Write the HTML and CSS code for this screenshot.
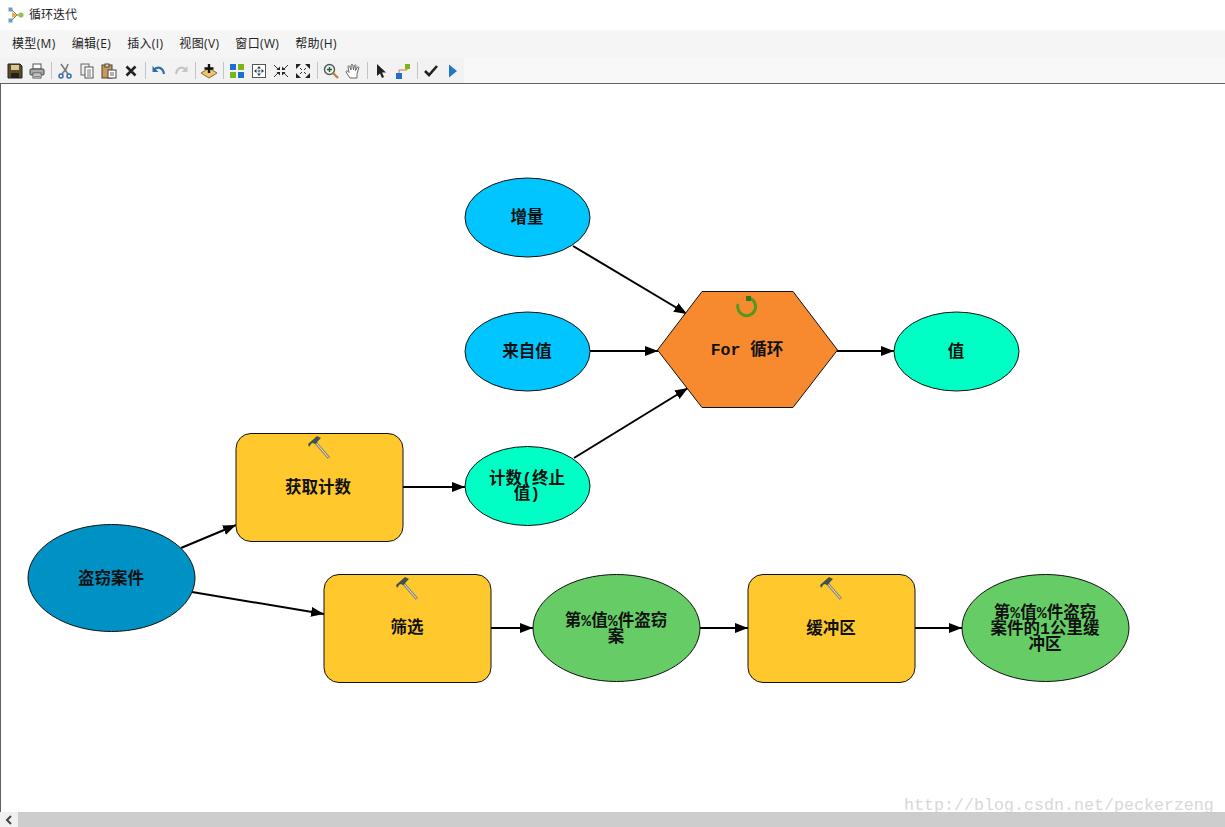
FILE: index.html
```html
<!DOCTYPE html>
<html lang="zh-CN">
<head>
  <meta charset="UTF-8">
  <title>循环迭代</title>
  <link rel="stylesheet" href="styles.css">
</head>
<body>
  <div class="window">
    <div class="titlebar">
      <svg class="app-icon" width="16" height="16" viewBox="0 0 16 16">
        <path d="M3 2 L9 8 L3 14" fill="none" stroke="#777" stroke-width="1"/>
        <path d="M9 8 H13" stroke="#777"/>
        <rect x="0.5" y="0.5" width="4" height="4" fill="#6a9ccc"/>
        <rect x="0.5" y="11.5" width="4" height="4" fill="#6a9ccc"/>
        <path d="M4 5 L9 8 L4 11 Z" fill="#e8b040"/>
        <circle cx="13" cy="8" r="2.6" fill="#8cc850"/>
      </svg>
      <span>循环迭代</span>
    </div>

    <div class="menubar">
      <span>模型(M)</span>
      <span>编辑(E)</span>
      <span>插入(I)</span>
      <span>视图(V)</span>
      <span>窗口(W)</span>
      <span>帮助(H)</span>
    </div>

    <div class="toolbar">
      <!-- save -->
      <div class="tool"><svg width="16" height="16" viewBox="0 0 16 16"><path d="M1 1H13L15 3V15H1Z" fill="#5a4a28" stroke="#222"/><rect x="4" y="2" width="8" height="5" fill="#d8c890"/><rect x="4" y="10" width="8" height="5" fill="#222"/></svg></div>
      <!-- print -->
      <div class="tool"><svg width="16" height="16" viewBox="0 0 16 16"><rect x="4" y="1" width="8" height="5" fill="#fff" stroke="#555"/><rect x="1" y="6" width="14" height="6" rx="1" fill="#aaa" stroke="#444"/><rect x="4" y="10" width="8" height="5" fill="#fff" stroke="#555"/><path d="M5 12H11M5 13.5H11" stroke="#888"/></svg></div>
      <div class="sep"></div>
      <!-- cut -->
      <div class="tool"><svg width="16" height="16" viewBox="0 0 16 16"><path d="M4 1L11 11M11 1L9 6L5 11" fill="none" stroke="#777" stroke-width="1.5"/><circle cx="4" cy="13" r="2" fill="none" stroke="#2f6ea8" stroke-width="1.5"/><circle cx="12" cy="13" r="2" fill="none" stroke="#2f6ea8" stroke-width="1.5"/></svg></div>
      <!-- copy -->
      <div class="tool"><svg width="16" height="16" viewBox="0 0 16 16"><rect x="2" y="1" width="8" height="11" fill="#eee" stroke="#666"/><rect x="6" y="4" width="8" height="11" fill="#fff" stroke="#555"/><path d="M8 7H12M8 9H12M8 11H12M8 13H12" stroke="#777"/></svg></div>
      <!-- paste -->
      <div class="tool"><svg width="16" height="16" viewBox="0 0 16 16"><rect x="1" y="2" width="10" height="13" fill="#c89a58" stroke="#5a4020"/><rect x="4" y="1" width="4" height="3" fill="#ddd" stroke="#444"/><rect x="7" y="7" width="8" height="8" fill="#fff" stroke="#444"/><path d="M9 10H13M9 12H13" stroke="#666"/></svg></div>
      <!-- delete -->
      <div class="tool"><svg width="16" height="16" viewBox="0 0 16 16"><path d="M3.5 3.5L12.5 12.5M12.5 3.5L3.5 12.5" stroke="#222" stroke-width="2.6"/></svg></div>
      <div class="sep"></div>
      <!-- undo -->
      <div class="tool"><svg width="16" height="16" viewBox="0 0 16 16"><path d="M3 7C6 3 12 4 13 11" fill="none" stroke="#2f6ea8" stroke-width="2.2"/><path d="M1.500 3V9H7.500Z" fill="#2f6ea8"/></svg></div>
      <!-- redo -->
      <div class="tool"><svg width="16" height="16" viewBox="0 0 16 16"><path d="M13 7C10 3 4 4 3 11" fill="none" stroke="#c4c4c4" stroke-width="2.2"/><path d="M14.500 3V9H8.500Z" fill="#c4c4c4"/></svg></div>
      <div class="sep"></div>
      <!-- add data -->
      <div class="tool"><svg width="16" height="16" viewBox="0 0 16 16"><path d="M8 5L16 10L8 15L0 10Z" fill="#eac674" stroke="#8a6a28"/><path d="M8 1V10M3.500 5.500H12.500" stroke="#111" stroke-width="2.4"/></svg></div>
      <div class="sep"></div>
      <!-- auto layout -->
      <div class="tool"><svg width="16" height="16" viewBox="0 0 16 16"><rect x="1" y="1" width="6" height="6" fill="#1f6fd0"/><rect x="9" y="1" width="6" height="6" fill="#7cb518"/><rect x="1" y="9" width="6" height="6" fill="#7cb518"/><rect x="9" y="9" width="6" height="6" fill="#1f6fd0"/></svg></div>
      <!-- full extent -->
      <div class="tool"><svg width="16" height="16" viewBox="0 0 16 16"><rect x="1.500" y="1.500" width="13" height="13" fill="#fff" stroke="#555"/><path d="M8 3L10 5.500H6ZM8 13L10 10.500H6ZM3 8L5.500 6V10ZM13 8L10.500 6V10Z" fill="#333"/><circle cx="8" cy="8" r="1.500" fill="#5a8cc0"/></svg></div>
      <!-- zoom in fixed -->
      <div class="tool"><svg width="16" height="16" viewBox="0 0 16 16"><path d="M1 2L6 7M15 2L10 7M1 14L6 9M15 14L10 9" stroke="#333" stroke-width="1"/><path d="M7 7V3.500L3.500 7ZM9 7H12.500L9 3.500ZM7 9H3.500L7 12.500ZM9 9V12.500L12.500 9Z" fill="#222"/></svg></div>
      <!-- zoom out fixed -->
      <div class="tool"><svg width="16" height="16" viewBox="0 0 16 16"><path d="M5 5L7 7M11 5L9 7M5 11L7 9M11 11L9 9" stroke="#333"/><path d="M1 1H6L1 6ZM15 1H10L15 6ZM1 15H6L1 10ZM15 15H10L15 10Z" fill="#222"/></svg></div>
      <div class="sep"></div>
      <!-- magnifier -->
      <div class="tool"><svg width="16" height="16" viewBox="0 0 16 16"><circle cx="6.500" cy="6.500" r="5" fill="#eef3f7" stroke="#555" stroke-width="1.400"/><path d="M10 10L15 15" stroke="#b08840" stroke-width="2.400"/><path d="M4 6.500H9M6.500 4V9" stroke="#1f6020" stroke-width="1.400"/></svg></div>
      <!-- pan -->
      <div class="tool"><svg width="16" height="16" viewBox="0 0 16 16"><path d="M5 15L1 9C0.500 8 2 7.500 2.500 8L4 9.500L3 3.500C3 2.500 4.500 2.500 4.800 3.500L6 7L6.200 2C6.300 1 7.700 1 7.800 2L8.500 7L9.500 2.500C9.800 1.500 11 1.800 11 2.800L10.500 7.500L12.500 4C13 3.300 14 3.800 13.800 4.600L12 11V15Z" fill="#fff" stroke="#666"/></svg></div>
      <div class="sep"></div>
      <!-- select -->
      <div class="tool"><svg width="16" height="16" viewBox="0 0 16 16"><path d="M4 1V13L7 10.500L9 15L11 14L9 9.500H13Z" fill="#222"/></svg></div>
      <!-- connect -->
      <div class="tool"><svg width="16" height="16" viewBox="0 0 16 16"><path d="M4 11V7H12V4" fill="none" stroke="#c87830"/><rect x="1" y="10" width="6" height="6" fill="#1f6fd0"/><rect x="10" y="1" width="5" height="5" fill="#7cb518"/></svg></div>
      <div class="sep"></div>
      <!-- validate -->
      <div class="tool"><svg width="16" height="16" viewBox="0 0 16 16"><path d="M2 8L6 12L14 3" fill="none" stroke="#222" stroke-width="2.600"/></svg></div>
      <!-- run -->
      <div class="tool"><svg width="16" height="16" viewBox="0 0 16 16"><path d="M4 1.500L12 8L4 14.500Z" fill="#1f78c8"/></svg></div>
    </div>

    <div class="canvas">
      <svg class="diagram" width="1224" height="728" viewBox="1 84 1224 728">
        <defs>
          <marker id="head" markerUnits="userSpaceOnUse" markerWidth="14" markerHeight="12" refX="13" refY="5" orient="auto">
            <path d="M0 0L13 5L0 10Z" fill="#000"/>
          </marker>
          <symbol id="hammer" viewBox="0 0 24 24">
            <path d="M8 7L22 23" stroke="#8a8a70" stroke-width="3"/>
            <path d="M9 8L21.500 22.500" stroke="#e8e4d0" stroke-width="1"/>
            <path d="M1 9L10 1L14 3L11 6L9 9L5 8L2 12Z" fill="#44504c"/>
          </symbol>
        </defs>

        <g class="edges">
          <line x1="573" y1="246" x2="687" y2="314"/>
          <line x1="590" y1="351" x2="658" y2="351"/>
          <line x1="574" y1="458" x2="688" y2="388"/>
          <line x1="837" y1="351" x2="894" y2="351"/>
          <line x1="403" y1="487" x2="465" y2="487"/>
          <line x1="181" y1="548" x2="236" y2="525"/>
          <line x1="192" y1="592" x2="324" y2="614"/>
          <line x1="491" y1="628" x2="533" y2="628"/>
          <line x1="700" y1="628" x2="748" y2="628"/>
          <line x1="915" y1="628" x2="962" y2="628"/>
        </g>

        <g class="nodes">
          <ellipse class="input" cx="527.500" cy="217.500" rx="62.500" ry="39.500"/>
          <ellipse class="input" cx="527.500" cy="351.500" rx="62.500" ry="39.500"/>
          <ellipse class="value" cx="527.500" cy="486" rx="62.500" ry="39.500"/>
          <ellipse class="value" cx="956.500" cy="351.500" rx="62.500" ry="39.500"/>
          <ellipse class="source" cx="111.500" cy="578" rx="83.500" ry="53.500"/>
          <ellipse class="output" cx="616.500" cy="628" rx="83.500" ry="53.500"/>
          <ellipse class="output" cx="1045.500" cy="628" rx="83.500" ry="53.500"/>
          <polygon class="iterator" points="657.500,350 702,291.500 793,291.500 837.500,350 793,407.500 702,407.500"/>
          <rect class="tool-node" x="236" y="433.500" width="167" height="108" rx="15"/>
          <rect class="tool-node" x="324" y="574.500" width="167" height="108" rx="15"/>
          <rect class="tool-node" x="748" y="574.500" width="167" height="108" rx="15"/>
        </g>

        <use href="#hammer" x="307" y="435" width="24" height="24"/>
        <use href="#hammer" x="395" y="576" width="24" height="24"/>
        <use href="#hammer" x="819" y="576" width="24" height="24"/>

        <path class="loop" d="M750.500 298.500A9 9 0 1 1 738 304"/>
        <rect class="loop-tip" x="746" y="296" width="5" height="5"/>

        <g class="labels">
          <text x="527" y="223">增量</text>
          <text x="527" y="357">来自值</text>
          <text><tspan x="527" y="484">计数(终止</tspan><tspan x="527" y="499">值)</tspan></text>
          <text x="956" y="357">值</text>
          <text x="111" y="584">盗窃案件</text>
          <text x="318" y="493">获取计数</text>
          <text x="407" y="633">筛选</text>
          <text><tspan x="616" y="626">第%值%件盗窃</tspan><tspan x="616" y="642">案</tspan></text>
          <text x="831" y="634">缓冲区</text>
          <text><tspan x="1045" y="618">第%值%件盗窃</tspan><tspan x="1045" y="634">案件的1公里缓</tspan><tspan x="1045" y="650">冲区</tspan></text>
          <text x="747" y="355">For 循环</text>
        </g>
      </svg>
    </div>

    <div class="hscroll">
      <div class="hscroll-btn">
        <svg width="8" height="10" viewBox="0 0 8 10"><path d="M6 1L2 5L6 9" fill="none" stroke="#444" stroke-width="2"/></svg>
      </div>
      <div class="hscroll-track"></div>
    </div>

    <div class="watermark">http://blog.csdn.net/peckerzeng</div>
  </div>
</body>
</html>
```

FILE: styles.css
```css
* {
  box-sizing: border-box;
}
body {
  margin: 0;
  font-family: "Open Sans", "Noto Sans CJK SC", sans-serif;
  font-size: 12px;
  color: #222;
  background: #fff;
  overflow: hidden;
}
.window {
  position: relative;
  display: flex;
  flex-direction: column;
  width: 1225px;
  height: 827px;
}
.titlebar {
  display: flex;
  align-items: center;
  gap: 5px;
  height: 30px;
  padding-left: 8px;
  line-height: 16px;
  background: #fff;
}
.titlebar span {
  padding-bottom: 1px;
}
.menubar {
  display: flex;
  align-items: center;
  gap: 16px;
  height: 28px;
  padding-left: 12px;
  padding-bottom: 1px;
  line-height: 16px;
  letter-spacing: 0.35px;
  background: #f5f5f5;
}
.menubar span {
  white-space: nowrap;
}
.toolbar {
  display: flex;
  align-items: center;
  height: 25px;
  padding-left: 4px;
  background: linear-gradient(to right, #f2f2f2 464px, #f8f8f8 464px);
}
.tool {
  display: flex;
  align-items: center;
  justify-content: center;
  width: 22px;
  height: 22px;
}
.sep {
  width: 1px;
  height: 17px;
  margin: 0 2.5px;
  background: #c4c4c4;
}
.canvas {
  flex: 1;
  min-height: 0;
  border-top: 1px solid #606060;
  border-left: 1px solid #606060;
  background: #fff;
}
.diagram {
  display: block;
}
.edges line {
  stroke: #000;
  stroke-width: 2;
  marker-end: url(#head);
}
.nodes > * {
  stroke: #111;
  stroke-width: 1;
}
.input {
  fill: #00c5ff;
}
.value {
  fill: #00ffc5;
}
.source {
  fill: #0092c5;
}
.output {
  fill: #66cd66;
}
.iterator {
  fill: #f78a2e;
}
.tool-node {
  fill: #ffc92e;
}
.loop {
  fill: none;
  stroke: #4f9a1e;
  stroke-width: 3;
}
.loop-tip {
  fill: #2f7a1e;
}
.labels text {
  font-family: "Liberation Mono", "Noto Sans CJK SC", monospace;
  font-size: 16.5px;
  font-weight: 700;
  text-anchor: middle;
  fill: #111;
}
.hscroll {
  display: flex;
  height: 15px;
  background: #cdcdcd;
}
.hscroll-btn {
  display: flex;
  align-items: center;
  justify-content: center;
  width: 18px;
  background: #f0f0f0;
}
.hscroll-track {
  flex: 1;
}
.watermark {
  position: absolute;
  left: 904px;
  top: 796px;
  font-family: "Liberation Mono", monospace;
  font-size: 16.67px;
  line-height: 20px;
  white-space: nowrap;
  color: #c4c4c4;
  opacity: 0.65;
}
```
